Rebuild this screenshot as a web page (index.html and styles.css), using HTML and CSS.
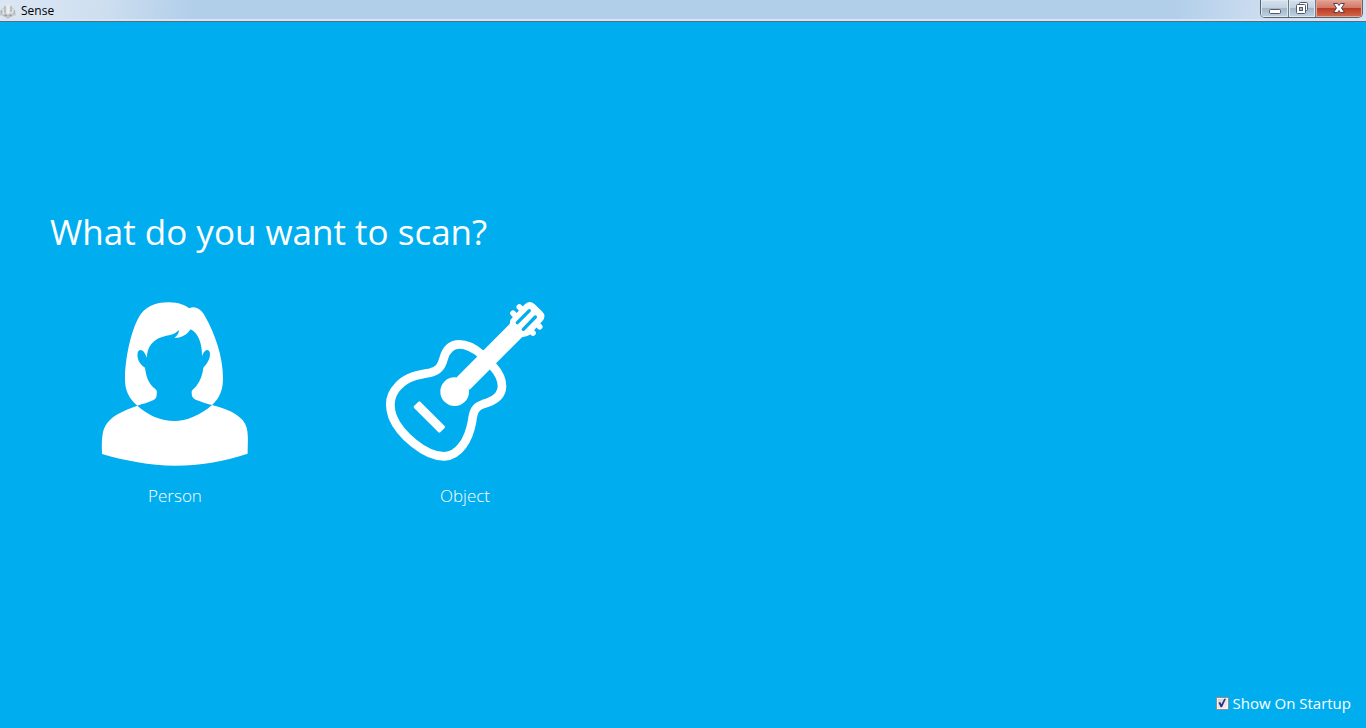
FILE: index.html
```html
<!DOCTYPE html>
<html lang="en">
  <head>
    <meta charset="utf-8">
    <title>Sense</title>
    <link rel="stylesheet" href="styles.css">
  </head>
  <body>
    <header class="titlebar">
      <svg class="logo" viewBox="0 0 16 16" aria-hidden="true">
        <path d="M6 2l2-2 3 2v8l-3 1-3-1z" fill="#e3e5e7" />
        <path d="M0 8l4-4v6l-4 3zM12 4l3 3 1 6-4-3z" fill="#c6c9cc" />
        <path d="M1 12l5-2 2 2 2-2 5 2-4 2-3 2-3-2z" fill="#c0c3c6" />
        <path d="M5 3v7M11 3v6M2 7v4M14 7v4M4 13l3-1M9 12l3 1" stroke="#96999d" fill="none" />
        <path d="M8 2v9M3 6v5M13 6v4" stroke="#f4f5f6" fill="none" />
      </svg>
      <span class="title">Sense</span>
      <div class="controls">
        <button class="control minimize" aria-label="Minimize">
          <svg viewBox="0 0 14 14"><rect x="1.500" y="8.500" width="11" height="4" rx="1" fill="#fff" stroke="#555a68" /></svg>
        </button>
        <button class="control restore" aria-label="Restore">
          <svg viewBox="0 0 14 14" stroke="#555a68">
            <rect x="4.500" y="1.500" width="8" height="8" rx="1" fill="#fff" />
            <rect x="1.500" y="3.500" width="9" height="9" rx="1" fill="#fff" />
            <rect x="4.500" y="6.500" width="3" height="3" fill="#a9bdd2" />
          </svg>
        </button>
        <button class="control close" aria-label="Close">
          <svg viewBox="0 0 14 14"><path d="M1.500 2.500h4L7 4.500l1.500-2h4L9.500 7l3 4.500h-4L7 9.500l-1.500 2h-4l3-4.500z" fill="#fff" stroke="#53414d" /></svg>
        </button>
      </div>
    </header>

    <main class="content">
      <h1 class="question">What do you want to scan?</h1>
      <div class="choices">
        <button class="choice">
          <svg class="person" viewBox="30 30 450 504" fill="#fff" aria-hidden="true">
            <path d="M142 347C115 324 105 300 105 268C105 210 121 130 144 86C162 50 195 37 237 37C266 37 286 46 298 55C316 46 334 58 345 79C375 132 399 200 399 265C399 303 388 325 366 345C350 340 334 336 317 329C307 324 305 318 305 306C305 300 313 296 319 288C332 272 338 252 340 233C352 220 360 207 360 192C360 180 351 177 345 183C340 188 338 194 336 198C337 162 325 129 302 118C289 136 274 144 253 144C262 137 267 130 267 120C255 132 242 135 226 138C192 145 170 170 171 203C165 191 160 180 152 180C142 180 142 193 143 202C145 215 154 227 165 233C168 258 175 281 195 296C202 301 201 306 200 314C200 322 197 327 189 331C175 338 158 342 142 347Z" />
            <path d="M142 347C175 377 215 393 252 393C290 393 331 376 366 345C426 360 461 381 470 413C476 437 473 463 473 491C400 515 330 527 255 527C180 527 105 512 36 492C35 455 35 427 46 408C60 380 98 362 142 347Z" />
          </svg>
          <span>Person</span>
        </button>
        <button class="choice">
          <svg class="guitar" viewBox="27 30 486 504" fill="#fff" aria-hidden="true">
            <path d="M318 192C292 170 272 163 253 163C224 163 212 184 206 205C200 228 191 243 165 248C129 254 95 260 70 288C46 312 39 342 53 381C74 432 149 500 208 499C252 497 281 450 291 395C295 362 301 350 325 342C358 333 381 317 381 288C381 268 370 247 353 228" fill="none" stroke="#fff" stroke-width="26" />
            <circle cx="239" cy="305" r="43" />
            <path d="M245 262L404 102L406 90L413 82L448 44Q463 29 479 43L500 63Q516 78 502 93L465 134L454 139L441 142L284 299Z" />
            <path d="M414 70L423 79M433 51L442 60M485 101L494 110M465 120L474 129" stroke="#fff" stroke-width="17" stroke-linecap="round" />
            <path d="M427 98L463 62M445 118L481 81" stroke="#00aeef" stroke-width="10" stroke-linecap="round" />
            <path d="M133 338L206 411L193 424L120 351Z" stroke="#fff" stroke-width="8" stroke-linejoin="round" />
          </svg>
          <span>Object</span>
        </button>
      </div>
    </main>

    <footer class="footer">
      <input type="checkbox" id="startup" class="check" checked>
      <label for="startup">Show On Startup</label>
    </footer>
  </body>
</html>
```
FILE: styles.css
```css
* {
  box-sizing: border-box;
}

body {
  display: flex;
  flex-direction: column;
  min-height: 100vh;
  margin: 0;
  background: #00aeef;
  color: #fff;
  font-family: "Segoe UI", "Open Sans", sans-serif;
}

button {
  padding: 0;
  border: 0;
  background: none;
  color: inherit;
  font-family: inherit;
}

.titlebar {
  display: flex;
  align-items: center;
  height: 22px;
  padding-right: 3px;
  border-bottom: 1px solid #5f6b78;
  background: linear-gradient(100deg, #dbe6f3, #cfdff0 100px, #b2cfea 190px, #b2cfea 86%, #cbdcef 92%, #d3e2f1);
  box-shadow: inset 0 -2px #d5e5f5;
  color: #000;
  font-size: 12px;
}

.logo {
  width: 16px;
  height: 16px;
  margin-right: 5px;
}

.title {
  line-height: 20px;
}

.controls {
  display: flex;
  align-self: flex-start;
  margin-left: auto;
  height: 18px;
  border: 1px solid #596575;
  border-top: 0;
  border-radius: 0 0 5px 5px;
  overflow: hidden;
}

.control {
  display: flex;
  justify-content: center;
  width: 27px;
  padding-top: 1px;
  border-right: 1px solid #6d7888;
  background: linear-gradient(#d5e0eb, #c3d2e1 45%, #a4b7ca 50%, #bfd2e3);
  box-shadow: inset 0 0 0 1px #dde8f3;
}

.control svg {
  width: 14px;
  height: 14px;
}

.minimize {
  width: 28px;
}

.close {
  width: 46px;
  border-right: 0;
  background: linear-gradient(#e2a294, #d27867 45%, #bd3b24 50%, #d26a4c);
  box-shadow: inset 0 0 0 1px #e3a695;
}

.content {
  display: flex;
  flex: 1;
  flex-direction: column;
  justify-content: center;
  padding: 3px 50px 0;
}

.question {
  margin: 0 0 44px;
  font-size: 35px;
  font-weight: 400;
  line-height: 48px;
}

.choices {
  display: flex;
  gap: 40px;
}

.choice {
  display: flex;
  flex-direction: column;
  align-items: center;
  gap: 16px;
  width: 250px;
  font-size: 17px;
  font-weight: 300;
  line-height: 24px;
}

.person {
  width: 150px;
  height: 168px;
}

.guitar {
  width: 162px;
  height: 168px;
}

.footer {
  display: flex;
  align-items: center;
  justify-content: flex-end;
  gap: 4px;
  padding: 0 15px 13px;
  font-size: 15px;
  line-height: 24px;
}

.check {
  width: 13px;
  height: 13px;
  margin: 0;
  appearance: none;
  border: 1px solid #8e8f8f;
  background: linear-gradient(135deg, #cbcfd5, #f6f6f6);
  box-shadow: inset 0 0 0 1px #f4f4f4;
}

.check:checked::before {
  content: "";
  display: block;
  height: 11px;
  background: #2b2f80;
  clip-path: polygon(18% 48%, 34% 42%, 45% 62%, 70% 12%, 86% 12%, 50% 88%, 38% 88%);
}
```
